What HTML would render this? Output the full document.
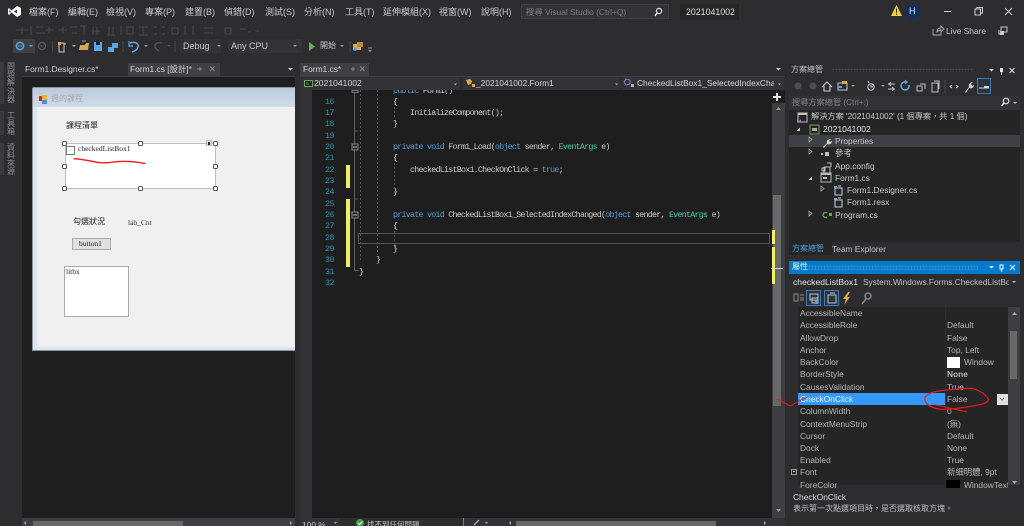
<!DOCTYPE html>
<html><head><meta charset="utf-8">
<style>
*{box-sizing:border-box}
html,body{margin:0;padding:0;width:1024px;height:526px;overflow:hidden;background:#2d2d30}
body{position:relative;font-family:"Liberation Sans","Noto Sans CJK TC",sans-serif;color:#c8c8c8;font-size:9px}
#w{position:absolute;left:0;top:0;width:1024px;height:526px;overflow:hidden;background:#2d2d30;filter:blur(.35px)}
.a,.t,.c,.n{position:absolute}
.t{white-space:nowrap;line-height:12px;height:12px}
.c{font-family:"Liberation Mono","Noto Sans CJK TC",monospace;font-size:8.4px;letter-spacing:-.78px;white-space:pre;color:#c8c8c8;line-height:11px;height:11px;left:393px}
.n{font-family:"Liberation Mono",monospace;font-size:8.2px;letter-spacing:-.4px;color:#2b91af;line-height:11px;height:11px;left:323px;width:11px;text-align:right}
.k{color:#569cd6}.y{color:#4ec9b0}
.p{left:800px;color:#b4b4b4;font-size:8.4px}.v{left:947px;color:#b4b4b4;font-size:8.4px}
.tr{font-size:8.4px;color:#c8c8c8}
.s{font-family:"Liberation Serif",serif;font-size:7.5px;line-height:12px;color:#222}
.h{position:absolute;width:5px;height:5px;background:#fff;border:1px solid #555;border-radius:1.5px}
svg{position:absolute;left:0;top:0;overflow:visible}
</style></head><body><div id="w">

<!-- menu -->
<div class="t" style="left:29px;top:6px">檔案(F)</div>
<div class="t" style="left:68px;top:6px">編輯(E)</div>
<div class="t" style="left:106px;top:6px">檢視(V)</div>
<div class="t" style="left:145px;top:6px">專案(P)</div>
<div class="t" style="left:185px;top:6px">建置(B)</div>
<div class="t" style="left:224px;top:6px">偵錯(D)</div>
<div class="t" style="left:265px;top:6px">測試(S)</div>
<div class="t" style="left:304px;top:6px">分析(N)</div>
<div class="t" style="left:345px;top:6px">工具(T)</div>
<div class="t" style="left:383px;top:6px">延伸模組(X)</div>
<div class="t" style="left:439px;top:6px">視窗(W)</div>
<div class="t" style="left:481px;top:6px">說明(H)</div>

<!-- search box -->
<div class="a" style="left:521px;top:4px;width:148px;height:15px;background:#333337;border:1px solid #3f3f46"></div>
<div class="t" style="left:526px;top:6px;color:#7f7f7f;font-size:8.4px">搜尋 Visual Studio (Ctrl+Q)</div>
<div class="a" style="left:680px;top:4px;width:59px;height:16px;background:#252526"></div>
<div class="t" style="left:686px;top:6px;color:#e0e0e0;font-size:8.8px">2021041002</div>
<div class="a" style="left:905px;top:4px;width:15px;height:15px;border-radius:50%;background:#0d2f66"></div>
<div class="t" style="left:909px;top:5px;color:#e8e8e8;font-size:9px">H</div>
<div class="t" style="left:946px;top:25px;color:#c8c8c8;font-size:8.4px">Live Share</div>

<!-- combos -->
<div class="a" style="left:180px;top:39px;width:41px;height:14px;background:#333337"></div>
<div class="t" style="left:183px;top:40px;font-size:9px">Debug</div>
<div class="a" style="left:228px;top:39px;width:74px;height:14px;background:#333337"></div>
<div class="t" style="left:231px;top:40px;font-size:9px">Any CPU</div>
<div class="t" style="left:320px;top:40px;font-size:8px">開始</div>
<div class="a" style="left:13px;top:39px;width:22px;height:14px;background:#3f3f46"></div>

<!-- left vertical tabs -->
<div class="a" style="left:0;top:62px;width:4px;height:42px;background:#3a3a3e"></div>
<div class="a" style="left:0;top:111px;width:4px;height:24px;background:#3a3a3e"></div>
<div class="a" style="left:0;top:143px;width:4px;height:32px;background:#3a3a3e"></div>
<div class="a" style="left:7px;top:63px;width:9px;font-size:8px;line-height:8.2px;color:#8f8f8f">問題解決器</div>
<div class="a" style="left:7px;top:112px;width:9px;font-size:8px;line-height:8px;color:#8f8f8f">工具箱</div>
<div class="a" style="left:7px;top:144px;width:9px;font-size:8px;line-height:8px;color:#8f8f8f">資料來源</div>

<!-- left doc tabs -->
<div class="t" style="left:25px;top:63px;color:#d0d0d0;font-size:8.4px">Form1.Designer.cs*</div>
<div class="a" style="left:128px;top:63px;width:92px;height:13px;background:#3f3f46"></div>
<div class="t" style="left:130px;top:63px;color:#d8d8d8;font-size:8.4px">Form1.cs [設計]*</div>

<!-- designer surface -->
<div class="a" style="left:22px;top:76px;width:273px;height:442px;background:#1e1e1e"></div>
<div class="a" style="left:22px;top:76px;width:273px;height:1px;background:#3f3f46"></div>
<div class="a" style="left:32px;top:87px;width:263px;height:264px;background:#d9e5f2;border:1px solid #8e9398;border-right:0;border-radius:2px 0 0 0"></div>
<div class="a" style="left:33px;top:88px;width:262px;height:19px;background:linear-gradient(#bccbdb,#cfdcea)"></div>
<div class="a" style="left:37px;top:107px;width:258px;height:240px;background:#f0f0f0"></div>
<div class="a" style="left:39px;top:96px;width:5px;height:5px;background:#c62f2f"></div>
<div class="a" style="left:42px;top:95px;width:5px;height:5px;background:#e9b43a"></div>
<div class="a" style="left:42px;top:100px;width:5px;height:4px;background:#4f8fd9"></div>
<div class="t" style="left:51px;top:93px;color:#a9a9a9;font-size:8px">週的課程</div>
<div class="t" style="left:66px;top:120px;color:#222;font-size:8px">課程清單</div>
<div class="a" style="left:65px;top:143px;width:151px;height:46px;background:#fff;border:1px solid #bdbdbd"></div>
<div class="a" style="left:66px;top:146px;width:9px;height:9px;border:1px solid #777;background:#fff"></div>
<div class="t s" style="left:78px;top:143px">checkedListBox1</div>
<div class="h" style="left:62px;top:141px"></div><div class="h" style="left:138px;top:141px"></div><div class="h" style="left:213px;top:141px"></div>
<div class="h" style="left:62px;top:164px"></div><div class="h" style="left:213px;top:164px"></div>
<div class="h" style="left:62px;top:186px"></div><div class="h" style="left:138px;top:186px"></div><div class="h" style="left:213px;top:186px"></div>
<div class="a" style="left:206px;top:140px;width:6px;height:6px;background:#ddd;border:1px solid #bbb"></div>
<div class="a" style="left:208px;top:142px;width:2px;height:3px;background:#222"></div>
<div class="t" style="left:73px;top:216px;color:#222;font-size:8px">勾選狀況</div>
<div class="t s" style="left:128px;top:217px;color:#333">lab_Cnt</div>
<div class="a" style="left:72px;top:238px;width:39px;height:12px;background:#dfdfdf;border:1px solid #adadad"></div>
<div class="t s" style="left:79px;top:238px">button1</div>
<div class="a" style="left:64px;top:266px;width:65px;height:51px;background:#fff;border:1px solid #a9a9a9"></div>
<div class="t s" style="left:66px;top:266px">litbx</div>

<!-- left bottom scroll -->
<div class="a" style="left:22px;top:518px;width:273px;height:8px;background:#3e3e42"></div>
<div class="a" style="left:33px;top:521px;width:150px;height:5px;background:#686868"></div>

<!-- center tabs -->
<div class="a" style="left:300px;top:63px;width:69px;height:13px;background:#3f3f46"></div>
<div class="t" style="left:303px;top:63px;color:#d8d8d8;font-size:8.4px">Form1.cs*</div>

<!-- nav bar -->
<div class="a" style="left:300px;top:76px;width:485px;height:14px;background:#2d2d30;border-top:1px solid #3f3f46"></div>
<div class="a" style="left:300px;top:77px;width:160px;height:13px;background:#333337"></div>
<div class="a" style="left:463px;top:77px;width:157px;height:13px;background:#333337"></div>
<div class="a" style="left:623px;top:77px;width:161px;height:13px;background:#333337"></div>
<div class="a" style="left:304px;top:80px;width:9px;height:7px;border:1px solid #6ca35a;background:#252526"></div>
<div class="t" style="left:314px;top:77px;color:#d4d4d4;font-size:8.6px">2021041002</div>
<div class="t" style="left:476px;top:77px;color:#d4d4d4;font-size:8.4px">_2021041002.Form1</div>
<div class="t" style="left:637px;top:77px;width:137px;overflow:hidden;color:#d4d4d4;font-size:8.4px">CheckedListBox1_SelectedIndexChar</div>

<!-- editor -->
<div class="a" style="left:300px;top:90px;width:12px;height:428px;background:#333337"></div>
<div class="a" style="left:312px;top:90px;width:460px;height:428px;background:#1e1e1e"></div>
<div class="a" style="left:772px;top:90px;width:13px;height:428px;background:#3e3e42"></div>
<div class="a" style="left:773px;top:195px;width:8px;height:211px;background:#686868"></div>
<div class="a" style="left:772px;top:90px;width:13px;height:13px;background:#1e1e1e"></div>

<div class="a" style="left:312px;top:90px;width:460px;height:4px;overflow:hidden"><div class="c" style="top:-4px;left:81px"><span class="k">public</span> Form1()</div></div>
<div class="n" style="top:97px">16</div><div class="c" style="top:97px">{</div>
<div class="n" style="top:108px">17</div><div class="c" style="top:108px;left:410px">InitializeComponent();</div>
<div class="n" style="top:119px">18</div><div class="c" style="top:119px">}</div>
<div class="n" style="top:131px">19</div>
<div class="n" style="top:142px">20</div><div class="c" style="top:142px"><span class="k">private void</span> Form1_Load(<span class="k">object</span> sender, <span class="y">EventArgs</span> e)</div>
<div class="n" style="top:153px">21</div><div class="c" style="top:153px">{</div>
<div class="n" style="top:165px">22</div><div class="c" style="top:165px;left:410px">checkedListBox1.CheckOnClick = <span class="k">true</span>;</div>
<div class="n" style="top:176px">23</div>
<div class="n" style="top:187px">24</div><div class="c" style="top:187px">}</div>
<div class="n" style="top:199px">25</div>
<div class="n" style="top:210px">26</div><div class="c" style="top:210px"><span class="k">private void</span> CheckedListBox1_SelectedIndexChanged(<span class="k">object</span> sender, <span class="y">EventArgs</span> e)</div>
<div class="n" style="top:221px">27</div><div class="c" style="top:221px">{</div>
<div class="n" style="top:233px">28</div>
<div class="n" style="top:244px">29</div><div class="c" style="top:244px">}</div>
<div class="n" style="top:255px">30</div><div class="c" style="top:255px;left:376px">}</div>
<div class="n" style="top:267px">31</div><div class="c" style="top:267px;left:359px">}</div>
<div class="n" style="top:278px">32</div>

<div class="a" style="left:346px;top:165px;width:4px;height:23px;background:#efef6e"></div>
<div class="a" style="left:346px;top:199px;width:4px;height:68px;background:#efef6e"></div>
<div class="a" style="left:358px;top:233px;width:412px;height:11px;border:1px solid #55554f"></div>
<div class="a" style="left:772px;top:230px;width:3px;height:14px;background:#efef6e"></div>
<div class="a" style="left:772px;top:247px;width:3px;height:37px;background:#efef6e"></div>
<div class="a" style="left:771px;top:268px;width:12px;height:1px;background:#d8d8d8"></div>

<!-- editor status -->
<div class="a" style="left:300px;top:518px;width:485px;height:8px;background:#333337"></div>
<div class="a" style="left:340px;top:518px;width:124px;height:8px;background:#2d2d30"></div>
<div class="t" style="left:302px;top:519px;font-size:8.4px">100 %</div>
<div class="t" style="left:367px;top:519px;font-size:7.5px">找不到任何問題</div>
<div class="a" style="left:516px;top:521px;width:200px;height:5px;background:#686868"></div>

<!-- solution explorer -->
<div class="t" style="left:791px;top:64px;font-size:8px;color:#c0c0c0">方案總管</div>
<div class="a" style="left:832px;top:68px;width:142px;height:4px;background-image:radial-gradient(#46464a 40%,transparent 45%);background-size:3px 3px"></div>
<div class="a" style="left:789px;top:96px;width:231px;height:14px;background:#333337"></div>
<div class="t" style="left:792px;top:97px;color:#7f7f7f;font-size:8.2px">搜尋方案總管 (Ctrl+;)</div>
<div class="a" style="left:789px;top:110px;width:231px;height:132px;background:#252526"></div>
<div class="a" style="left:789px;top:135px;width:231px;height:12px;background:#3f3f46"></div>
<div class="a" style="left:977px;top:78px;width:14px;height:16px;border:1px solid #3d7ab8;background:#2a3340"></div>
<div class="t tr" style="left:811px;top:111px;font-size:8.2px">解決方案 '2021041002' (1 個專案，共 1 個)</div>
<div class="t tr" style="left:823px;top:123px;color:#e0e0e0;font-size:8.6px">2021041002</div>
<div class="t tr" style="left:835px;top:135px">Properties</div>
<div class="t tr" style="left:835px;top:147px">參考</div>
<div class="t tr" style="left:835px;top:160px">App.config</div>
<div class="t tr" style="left:835px;top:172px">Form1.cs</div>
<div class="t tr" style="left:847px;top:184px">Form1.Designer.cs</div>
<div class="t tr" style="left:847px;top:196px">Form1.resx</div>
<div class="t tr" style="left:835px;top:209px">Program.cs</div>
<div class="a" style="left:789px;top:242px;width:43px;height:13px;background:#252526"></div>
<div class="t" style="left:792px;top:243px;color:#4b9fe0;font-size:8px">方案總管</div>
<div class="t" style="left:832px;top:243px;color:#c0c0c0;font-size:8.4px">Team Explorer</div>

<!-- properties -->
<div class="a" style="left:789px;top:261px;width:231px;height:13px;background:#007acc"></div>
<div class="t" style="left:792px;top:261px;color:#e8f2fa;font-size:8px">屬性</div>
<div class="a" style="left:808px;top:265px;width:170px;height:5px;background-image:radial-gradient(#3d95d6 40%,transparent 45%);background-size:3px 3px"></div>
<div class="a" style="left:789px;top:274px;width:231px;height:15px;background:#2d2d30"></div>
<div class="t" style="left:793px;top:276px;color:#e0e0e0;font-size:8.6px">checkedListBox1</div>
<div class="t" style="left:863px;top:276px;width:146px;overflow:hidden;color:#c0c0c0;font-size:8.3px">System.Windows.Forms.CheckedListBo</div>
<div class="a" style="left:806px;top:290px;width:15px;height:16px;background:#2a3340;border:1px solid #3d7ab8"></div>
<div class="a" style="left:824px;top:290px;width:15px;height:16px;background:#2a3340;border:1px solid #3d7ab8"></div>
<div class="a" style="left:789px;top:307px;width:9px;height:178px;background:#2d2d30"></div>
<div class="a" style="left:798px;top:307px;width:210px;height:178px;background:#252526"></div>
<div class="a" style="left:945px;top:307px;width:1px;height:178px;background:#2d2d30"></div>
<div class="a" style="left:1008px;top:307px;width:12px;height:178px;background:#3e3e42"></div>
<div class="a" style="left:1010px;top:331px;width:7px;height:48px;background:#686868"></div>

<div class="t p" style="top:307px">AccessibleName</div>
<div class="t p" style="top:319px">AccessibleRole</div><div class="t v" style="top:319px">Default</div>
<div class="t p" style="top:332px">AllowDrop</div><div class="t v" style="top:332px">False</div>
<div class="t p" style="top:344px">Anchor</div><div class="t v" style="top:344px">Top, Left</div>
<div class="t p" style="top:356px">BackColor</div>
<div class="a" style="left:947px;top:357px;width:13px;height:11px;background:#fff"></div>
<div class="t v" style="top:356px;left:964px">Window</div>
<div class="t p" style="top:368px">BorderStyle</div><div class="t v" style="top:368px;font-weight:bold">None</div>
<div class="t p" style="top:381px">CausesValidation</div><div class="t v" style="top:381px">True</div>
<div class="a" style="left:798px;top:393px;width:147px;height:12px;background:#3399ff"></div>
<div class="t p" style="top:393px;color:#eaf4ff">CheckOnClick</div><div class="t v" style="top:393px">False</div>
<div class="a" style="left:997px;top:394px;width:11px;height:11px;background:#e0e0e0"></div>
<div class="t p" style="top:405px">ColumnWidth</div><div class="t v" style="top:405px">0</div>
<div class="t p" style="top:418px">ContextMenuStrip</div><div class="t v" style="top:418px">(無)</div>
<div class="t p" style="top:430px">Cursor</div><div class="t v" style="top:430px">Default</div>
<div class="t p" style="top:442px">Dock</div><div class="t v" style="top:442px">None</div>
<div class="t p" style="top:454px">Enabled</div><div class="t v" style="top:454px">True</div>
<div class="t p" style="top:466px">Font</div><div class="t v" style="top:466px">新細明體, 9pt</div>
<div class="a" style="left:791px;top:469px;width:6px;height:6px;border:1px solid #999"></div>
<div class="a" style="left:793px;top:471px;width:2px;height:1px;background:#ccc"></div>
<div class="t p" style="top:479px">ForeColor</div>
<div class="a" style="left:946px;top:480px;width:14px;height:8px;background:#000"></div>
<div class="t v" style="top:479px;left:964px;width:44px;overflow:hidden">WindowText</div>
<div class="a" style="left:789px;top:488px;width:231px;height:38px;background:#2d2d30"></div>
<div class="t" style="left:793px;top:491px;color:#d8d8d8;font-size:8.4px">CheckOnClick</div>
<div class="t" style="left:793px;top:503px;color:#c0c0c0;font-size:8px">表示第一次點選項目時，是否選取核取方塊。</div>

<svg width="1024" height="526" viewBox="0 0 1024 526" fill="none">
 <!-- VS logo -->
 <path d="M17 6l4 2v7l-4 2-5.500-4.500L9 15l-1-1V9l1-1 2.500 2.500z" fill="#f4f4f4"/>
 <path d="M9.500 10v3l1.500-1.500zM17 9.500v4l-3-2z" fill="#2d2d30"/>
 <!-- disabled layout toolbar -->
 <g stroke="#4c4c50" stroke-width="1">
  <path d="M16 30h12M22 27v7M31 26v9M36 27h7M36 33h9M49 27v7M49 30h-3M49 30h5M58 30h9M63 27v7M70 27h7M72 33h5M80 26h7M84 26v9M93 27v8M97 27v8M93 31h7M107 35h8M109 27v8M113 27v8M121 26v9M127 27h6v7h-6zM139 27h9M143 27v8M139 35h9M154 27h3M162 27h3M154 34h3M162 34h3M172 28h6v6h-6zM185 26v9M193 26v9M204 28h9M204 33h9M225 28h6v6h-6zM240 29h6M248 32h3M255 31h4"/>
 </g>
 <!-- toolbar separators -->
 <path d="M52.500 41v11M123 41v11M175 41v11M350 41v11" stroke="#47474b"/>
 <!-- nav back/forward -->
 <circle cx="20" cy="46" r="3.600" stroke="#5aa7e8" stroke-width="1.500"/><path d="M18 46h4" stroke="#5aa7e8"/>
 <path d="M29 45l2 2 2-2z" fill="#5aa7e8"/>
 <circle cx="42" cy="46" r="3.500" stroke="#55555a" stroke-width="1.500"/><path d="M40 46h4" stroke="#55555a"/>
 <!-- new project -->
 <path d="M59 43h5v9h-5zM64 44h2" stroke="#c8c8c8" fill="#2d2d30"/><path d="M58 42h3v3h-3z" fill="#d9a857"/>
 <path d="M72 45l2 2 2-2z" fill="#aaa"/>
 <path d="M79 50l1-5h5l1-2h3l-1 7z" fill="#d8a656"/><path d="M82 41h4" stroke="#5aa7e8"/>
 <path d="M94 42h8v9h-8z" fill="#5aa7e8"/><path d="M96 42h4v3h-4z" fill="#1e1e1e"/>
 <path d="M112 43h6v5h-6z" fill="#5aa7e8"/><path d="M108 47h6v5h-6z" fill="#5aa7e8"/>
 <!-- undo/redo -->
 <path d="M130 43c6-2 9 1 8 4-1 3-3 4-6 5" stroke="#5aa7e8" stroke-width="1.500"/><path d="M129 41v5h4" stroke="#5aa7e8" stroke-width="1.200"/>
 <path d="M144 45l2 2 2-2z" fill="#999"/>
 <path d="M162 43c-5-1-8 1-7 4 1 2 2 3 4 4" stroke="#55555a" stroke-width="1.300"/>
 <path d="M167 45l2 2 2-2z" fill="#555"/>
 <path d="M217 45l2 2 2-2zM293 45l2 2 2-2zM340 45l2 2 2-2z" fill="#999"/>
 <path d="M309 42v9l6-4.500z" fill="#5fb35f"/>
 <path d="M353 44h8v6h-8z" fill="#d9a857"/><path d="M357 42h6v5h-6z" fill="#b98a40"/><circle cx="355" cy="49" r="1.800" fill="#5aa7e8"/>
 <path d="M368 48h4" stroke="#999"/><path d="M368 50h4l-2 2z" fill="#999"/>
 <!-- tab pins -->
 <path d="M198 69h4M200 67v4M198 69h-1M351 69h4M353 67v4" stroke="#8a8a8a"/>
 <path d="M210 66.500l4.500 4.500M214.500 66.500l-4.500 4.500M360 66.500l4.500 4.500M364.500 66.500l-4.500 4.500" stroke="#8a8a8a"/>
 <!-- tab overflow triangles -->
 <path d="M288 68h5l-2.500 2.500zM776 68h5l-2.500 2.500z" fill="#e0e0e0"/>
 <!-- search -->
 <circle cx="659" cy="11" r="2.600" stroke="#e8e8e8" stroke-width="1.200"/><path d="M657 13l-2 3" stroke="#e8e8e8" stroke-width="1.400"/>
 <!-- warning -->
 <path d="M891 16h11l-5.500-11z" fill="#f4d03f"/><path d="M896.500 8.500v4M896.500 13.500v1.300" stroke="#222"/>
 <!-- window controls -->
 <path d="M944 11.500h7" stroke="#d0d0d0"/><path d="M975 9h5.500v6H975zM977 9V7.500h5.500V13h-2" stroke="#d0d0d0"/><path d="M1005 8l7 7M1012 8l-7 7" stroke="#d0d0d0"/>
 <!-- live share -->
 <path d="M933 29v6h8v-4M937 32c0-3 2-4 4-4V26l3 3-3 3v-2c-2 0-3 1-4 2z" stroke="#aaa" stroke-width=".9"/>
 <path d="M1001 27h6v5h-6zM1004 34h-5v-4" stroke="#c8c8c8"/><path d="M1000 31h4v4h-4z" fill="#c8c8c8"/>
 <!-- nav arrows -->
 <path d="M454 83.500h3l-1.500 1.800zM615 83.500h3l-1.500 1.800zM778 83.500h3l-1.500 1.800z" fill="#b0b0b0"/>
 <path d="M776 110l2.500-3 2.500 3zM776 509h5l-2.500 3z" fill="#999"/>
 <path d="M773 97h8M777 93v8" stroke="#e6e6e6" stroke-width="2"/>
 <path d="M466 80l4-1 2 2-1 3-3 1zM472 84h3v3h-3z" fill="#d9a857"/>
 <path d="M626 79l4 1v4l-4 1-2-3z" stroke="#a77bd6" stroke-width=".9"/><path d="M631 84h3v3h-3z" fill="#b0b0b0"/>
 <path d="M307 82v2h2M310 82h1" stroke="#6ca35a" stroke-width=".7"/>
 <!-- outline guides -->
 <path d="M354.500 90v180.500h4M354.500 131h3M354.500 199h3" stroke="#5f5f5f"/>
 <path d="M360.500 90v172M377.500 90v165M394.500 103v16M394.500 159v34M394.500 227v22" stroke="#555" stroke-dasharray="2 2"/>
 <path d="M352 90.500h6v2h-6z" fill="#1e1e1e" stroke="#777"/>
 <path d="M352 144h6v6h-6zM352 212h6v6h-6z" fill="#1e1e1e" stroke="#888"/><path d="M353 147h4M353 215h4" stroke="#bbb"/>
 <!-- solution panel top controls -->
 <path d="M989 69h5l-2.500 2.500zM1000 68h3v4h-3zM999 72h5" fill="#e0e0e0"/>
 <path d="M1001.500 72v3" stroke="#e0e0e0"/>
 <path d="M1009.500 68l5 5M1014.500 68l-5 5" stroke="#e0e0e0" stroke-width="1.100"/>
 <!-- se toolbar -->
 <circle cx="798" cy="86" r="3.500" fill="#4d4d50"/><circle cx="813" cy="86" r="3.500" fill="#4d4d50"/>
 <path d="M822 87l5-5 5 5M824 86v5h6v-5" stroke="#d0d0d0" stroke-width="1.100"/>
 <path d="M838 83h9v7h-9z" stroke="#c8c8c8"/><path d="M842 81h5v3h-5z" fill="#d9a857"/><path d="M838 86h4v2h-4z" fill="#5aa7e8"/>
 <path d="M851 85l2 2 2-2z" fill="#999"/>
 <circle cx="871" cy="87" r="3.200" stroke="#c8c8c8"/><path d="M868 81l1 2M871 85v2h2" stroke="#c8c8c8"/>
 <path d="M881 85l2 2 2-2z" fill="#999"/>
 <path d="M888 84h7M891 82l-2 2 2 2M888 89h7M892 87l2 2-2 2" stroke="#c8c8c8"/>
 <path d="M906 82a4 4 0 1 0 3 3" stroke="#5aa7e8" stroke-width="1.500"/><path d="M905 79.500v5l3-2.500z" fill="#5aa7e8"/>
 <path d="M917 86h5v5h-5zM920 84h5v5" stroke="#c0c0c0"/>
 <path d="M932 83h6v9h-6zM934 81h5v8" stroke="#c0c0c0"/>
 <path d="M945 80v13" stroke="#47474b"/>
 <path d="M952 85l-2 1.500 2 1.500M956 85l2 1.500-2 1.500" stroke="#d0d0d0"/>
 <path d="M965 92l4-5c-1-2 1-5 4-5l-2 2 1 2 2-1c0 3-3 4-5 3l-3 5z" fill="#d0d0d0"/>
 <path d="M979 88h10" stroke="#d8d8d8"/><path d="M984 86h5v2h-5z" fill="#d8d8d8"/>
 <!-- search se -->
 <circle cx="1006" cy="101" r="2.800" stroke="#e0e0e0" stroke-width="1.200"/><path d="M1004 103l-2.500 3" stroke="#e0e0e0" stroke-width="1.400"/>
 <path d="M1013 102h4l-2 2z" fill="#c0c0c0"/>
 <!-- tree icons -->
 <path d="M798 113h9v9h-9z" stroke="#c0c0c0"/><path d="M798 113h9v2h-9z" fill="#c0c0c0"/><path d="M797 119l2 2 2-2 0 4-2-1-2 1z" fill="#a66fd0"/>
 <path d="M800 127.500v3.500h-3.500z" fill="#d0d0d0"/>
 <path d="M810 125h9v9h-9z" stroke="#6ca35a"/><path d="M812 128h5v3h-5z" fill="#aaa"/>
 <path d="M809 137l3 2.500-3 2.500zM809 149l3 2.500-3 2.500zM809 211l3 2.500-3 2.500zM821 186l3 2.500-3 2.500z" stroke="#aaa" stroke-width=".8"/>
 <path d="M823 147l4-4c-1-2 1-4 4-4l-2 2 1 1 2-1c0 3-3 4-5 3l-3 4z" fill="#d0d0d0"/>
 <path d="M812 176.500v3.500h-3.500z" fill="#d0d0d0"/>
 <path d="M821 153h2v2h-2zM825 152h4v4h-4z" fill="#c0c0c0"/>
 <path d="M824 167h6v7h-6zM827 163h4v4M822 168h3v3h-3z" stroke="#c0c0c0"/>
 <path d="M821 173h10v9h-10z" stroke="#bbb"/><path d="M821 173h10v2h-10zM823 177h4v2h-4z" fill="#bbb"/>
 <path d="M835 188h7v7h-7zM838 186h3" stroke="#d0d0d0"/><path d="M834 186h3v2h-3zM834 198h3v2h-3z" fill="#5aa7e8"/>
 <path d="M835 200h7v7h-7zM838 198h3" stroke="#d0d0d0"/>
 <path d="M827 213a2.500 2.500 0 1 0 0 4" stroke="#6ab04c" stroke-width="1.200"/><path d="M829 213h3v3h-3z" fill="#6ab04c"/>
 <!-- props header -->
 <path d="M989 266h5l-2.500 2.500z" fill="#fff"/><path d="M1010 265l5 5M1015 265l-5 5" stroke="#fff" stroke-width=".9"/>
 <path d="M1000 265h3v4h-3zM1001.500 269v3" stroke="#fff"/>
 <path d="M1012 281h4l-2 2z" fill="#c0c0c0"/>
 <path d="M794 294h4v7h-4zM800 295h4M800 298h4M800 300h4" stroke="#8a8a8a"/>
 <path d="M810 294h8v6h-8zM812 298h6v5h-6z" stroke="#c0c0c0"/><path d="M815 300h3v4h-3z" fill="#5aa7e8"/>
 <path d="M828 295h8v8h-8zM830 293h5" stroke="#c0c0c0"/>
 <path d="M848 292l-5 7h3l-2 6 6-8h-3l3-5z" fill="#d9a857"/>
 <circle cx="868" cy="296" r="3" stroke="#8a8a8a" stroke-width="1.500"/><path d="M866 299l-4 5" stroke="#8a8a8a" stroke-width="1.500"/>
 <path d="M1012 315l2.500-3 2.500 3zM1012 481h5l-2.500 3z" fill="#aaa"/>
 <path d="M1000 398l2 2 2-2" stroke="#777"/>
 <!-- status details -->
 <circle cx="360" cy="523" r="4" fill="#3fa142"/><path d="M358 523l1.500 1.500 3-3" stroke="#fff"/>
 <path d="M334 522h3l-1.500 2zM485 522h3l-1.500 2zM26 521v4l-2-2zM290 521v4l2-2zM511 521v4l-2-2zM764 521v4l2-2z" fill="#b0b0b0"/>
 <path d="M463.500 518v8" stroke="#7a7a7a"/>
 <path d="M474 525l5-5" stroke="#c0c0c0" stroke-width="1.200"/>
 <!-- red annotations -->
 <g stroke="#f01818" fill="none" stroke-linecap="round">
  <path d="M74 158.700c9 .5 17 2.500 26 4 8 .8 15-1.500 23-1.400 8 0 15 .8 22 2.200" stroke-width="1.300"/>
  <path d="M776.700 399c4 1.500 9 4.500 13.300 7 3-1 5-3 8-4.300 3-1.800 7-3.800 10-5" stroke-width="1"/>
  <path d="M925 397c3-3 6-4.500 10-5.300 7-1.400 13-2 20-2.400 6-.6 12-1.300 17-1 6 1.500 10 4 13 6.700 2 2 4 4 3.300 5.500-1 2-4 3-6.600 3.800-7 1.400-13 2.400-20 3.400-7 1-14 1.800-20 1.600-5-.4-10-1.800-13.400-4.300-2.600-2.200-4-5-3.300-8z" stroke-width="1.200"/>
  <path d="M935 405c10 1.500 21 5 32 6.700" stroke-width="1"/>
 </g>
</svg>
</div></body></html>
